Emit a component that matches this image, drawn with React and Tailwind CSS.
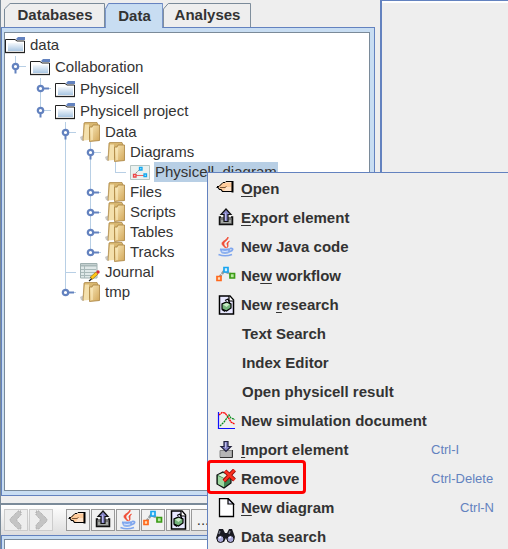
import React from 'react';

const iconProps = { viewBox: '0 0 20 20', className: 'w-5 h-5 shrink-0', 'aria-hidden': true };

function OpenIcon() {
  return (
    <svg {...iconProps}>
      <path d="M1 8 7 3.500H16V12.500H7L4 10Z" fill="#ffcc9c" />
      <path d="M10 8H15V12H8Z" fill="#ffe2c8" />
      <path d="M1 7.500H3L7 3.500H9L10 2.500H17" fill="none" stroke="#000" />
      <path d="M.5 8.500H2L3.500 10.500H5L6.500 12.500H17" fill="none" stroke="#000" strokeWidth="1.200" />
      <path d="M4 8.500H9L10.500 7.500" fill="none" stroke="#5a3a20" strokeWidth=".8" />
      <path d="M16.500 2V13.500" stroke="#000" strokeWidth="2" />
    </svg>
  );
}

function ExportIcon() {
  return (
    <svg {...iconProps}>
      <path d="M5 9H3.500V16.500H16.500V9H15" fill="#777" stroke="#111" strokeWidth="1.500" />
      <path d="M5 15H15V12H5Z" fill="#a4a8a4" />
      <path d="M10 1 5 6.500H8V13.500H12V6.500H15Z" fill="#8584c6" stroke="#111" strokeWidth="1.200" />
      <path d="M9.500 5V12.500" stroke="#b9b8ea" />
    </svg>
  );
}

function ImportIcon() {
  return (
    <svg {...iconProps}>
      <path d="M4 10.500H16V17.500H4Z" fill="#b5b5b5" stroke="#888" />
      <path d="M4 17.500H16.500V10" fill="none" stroke="#333" />
      <path d="M8 1.500H12V6.500H15L10 11.500 5 6.500H8Z" fill="#8584c6" stroke="#22223d" strokeWidth="1.200" />
      <path d="M9.500 2.500V8" stroke="#c1c0ec" />
    </svg>
  );
}

function JavaIcon() {
  return (
    <svg {...iconProps}>
      <path d="M12 0C13 3 7 4.500 8 7.500 8.200 9 10 9.500 9.500 11 8 9 6 8.500 6 6.500 6 4 11 3 12 0ZM13.500 4C10 6 11 7 11.500 8.500 11.800 9.500 11 10 10.500 11 14 9 10 7 13.500 4Z" fill="#f04a32" stroke="#f04a32" strokeWidth=".8" />
      <path d="M4 11.500H14V14.500Q13 17 9 17T4.500 14.500Z" fill="#8db1ef" />
      <path d="M4 12.500Q9 14 14 12M14 11.500Q18 11 16 13.500L13 15M2.500 17.500Q9 20 16 17.500" fill="none" stroke="#7fa6ee" strokeWidth="1.700" />
      <path d="M6 14Q9 15 12 14" stroke="#dce8ff" fill="none" />
    </svg>
  );
}

function WorkflowIcon() {
  return (
    <svg {...iconProps}>
      <path d="M3 12 8 5 13 7 18 10" fill="none" stroke="#929b9d" strokeWidth="2.500" strokeDasharray="4 1" />
      <path d="M8 1.500H12V6H8Z" fill="#d0efff" stroke="#18a5f0" strokeWidth="1.700" />
      <path d="M1 10.500H5V14.500H1Z" fill="#ffdcb5" stroke="#ff681c" strokeWidth="1.700" />
      <path d="M14 7.500H18.500V12H14Z" fill="#b8e8a0" stroke="#3b9b16" strokeWidth="1.700" />
    </svg>
  );
}

function ResearchIcon() {
  return (
    <svg {...iconProps}>
      <path d="M3.500 1H14L17.500 5V19H3.500Z" fill="#e8e8ff" stroke="#000" strokeWidth="1.500" />
      <path d="M13 1V6H17.500" fill="#fff" stroke="#000" strokeWidth="1.200" />
      <path d="M10.500 7 15 9V13L10.500 16 6 14V9Z" fill="#74b47b" stroke="#000" strokeWidth="1.200" />
      <path d="M7 9.500 11 8 13.500 9.500 10.500 12Z" fill="#ccebc9" />
      <path d="M9 5.500 12 4 14 9M6 14.500 9 16.500" fill="none" stroke="#000" strokeWidth="1.200" />
    </svg>
  );
}

function ChartIcon() {
  return (
    <svg {...iconProps}>
      <path d="M2.500 1V17.500H19" fill="none" stroke="#1010ff" strokeWidth="1.200" />
      <path d="M3 4 6 1.500 9 2 12 6 15 11 18.500 13" fill="none" stroke="#f00" strokeWidth="1.300" strokeDasharray="2 .5" />
      <path d="M4 15 8 11 11 7 13 4 15 7 19 8.500" fill="none" stroke="#098c1d" strokeWidth="1.300" strokeDasharray="2 .7" />
    </svg>
  );
}

function RemoveIcon() {
  return (
    <svg {...iconProps}>
      <path d="M7 3 15 6V14L8 19 1 15V6Z" fill="#3f8451" stroke="#111" strokeWidth="1.200" />
      <path d="M2 7 8 9.500V18L2 15Z" fill="#9ed8a0" />
      <path d="M2 6 7 4 13 6.500 8 9Z" fill="#e2f5df" />
      <path d="M9 2 18.500 11M18.500 1 8 12" stroke="#8f0707" strokeWidth="4" />
      <path d="M9 2 18.500 11M18.500 1 8 12" stroke="#fc3020" strokeWidth="2.500" />
    </svg>
  );
}

function PageIcon() {
  return (
    <svg {...iconProps}>
      <path d="M3.500 .5H12L17.500 6V18.500H3.500Z" fill="#fff" stroke="#000" strokeWidth="1.300" />
      <path d="M12 .5V6H17.500Z" fill="#dcdcf8" stroke="#000" strokeWidth="1.200" />
    </svg>
  );
}

function BinocularsIcon() {
  return (
    <svg {...iconProps}>
      <path d="M3 2H7L9 6H11L13 2H16L19 10 17 15 12 15 10 11 8 15 3 15 0 11Z" fill="#191921" />
      <circle cx="4.500" cy="12" r="3.500" fill="#a7a7d6" stroke="#111" />
      <circle cx="14.500" cy="12" r="3.500" fill="#a7a7d6" stroke="#111" />
      <path d="M4 4 3 7M14 4 13 7" stroke="#777b88" strokeWidth="1.500" />
      <path d="M3 11 5 10M13 11 15 10" stroke="#ececff" strokeWidth="1.500" />
    </svg>
  );
}

function FolderIcon() {
  return (
    <svg {...iconProps}>
      <defs>
        <linearGradient id="folder" x1="0" y1="0" x2="0" y2="1">
          <stop offset="0" stopColor="#f4f8fc" />
          <stop offset="1" stopColor="#a9c6e2" />
        </linearGradient>
      </defs>
      <path d="M.5 4.500H10L12 6H19.500V17.500H.5Z" fill="#fff" stroke="#222" />
      <path d="M3 8H18V16H3Z" fill="url(#folder)" />
      <path d="M11 4 13 2H20V5H12Z" fill="#6382bf" />
      <path d="M0 17.500H20" stroke="#222" strokeWidth="1.300" />
    </svg>
  );
}

function PackageIcon() {
  return (
    <svg {...iconProps}>
      <defs>
        <linearGradient id="gold" x1="0" y1="0" x2="1" y2="1">
          <stop offset="0" stopColor="#f9e9bb" />
          <stop offset="1" stopColor="#d2a759" />
        </linearGradient>
      </defs>
      <path d="M0 15 4 13V19L1 18Z" fill="#c8c8c8" />
      <path d="M4 1 5 .5H17L18 3V16H5L3 18.500Z" fill="#d8b770" stroke="#a8813d" strokeWidth=".7" />
      <path d="M5 2.500H9V18L3.500 18.500Z" fill="#f4e0ac" />
      <path d="M9.500 5H12L13 3H19.500V18.500L9.500 19.500Z" fill="url(#gold)" stroke="#a8813d" strokeWidth=".8" />
      <path d="M12 6V18" stroke="#fff0c5" />
    </svg>
  );
}

function DiagramIcon() {
  return (
    <svg {...iconProps}>
      <path d="M.5 3.500H19.500V17.500H.5Z" fill="#eaf1ef" stroke="#b6c5c3" />
      <path d="M4 13 10 7" fill="none" stroke="#7a8a89" strokeDasharray="2 1" />
      <path d="M4 13.500H15" stroke="#ec6262" />
      <path d="M3.500 12.500H6V15H3.500Z" fill="#fff" stroke="#ec4545" strokeWidth="1.300" />
      <path d="M9.500 5.500H12V8H9.500ZM14 12H16.500V14.500H14Z" fill="#c8f0ff" stroke="#13a8ef" strokeWidth="1.300" />
    </svg>
  );
}

function JournalIcon() {
  return (
    <svg {...iconProps}>
      <path d="M.5 1.500H17V16H.5Z" fill="#dfe8e8" stroke="#9fb0b0" />
      <path d="M1 2.500H17V4.500H1Z" fill="#a9b9b9" />
      <path d="M1 7.500H16M1 10.500H15M1 13.500H12M4.500 4V16" stroke="#a9b9b9" />
      <path d="M11 16.500 17 11" stroke="#8a6500" strokeWidth="3.500" />
      <path d="M11.500 16 17 11" stroke="#ffc61a" strokeWidth="2.500" />
      <circle cx="18" cy="10" r="1.700" fill="#d42d38" />
      <path d="M9 19 11.500 17" stroke="#111" strokeWidth="1.300" />
    </svg>
  );
}

/* One 25px column of the tree: blank, passing line, leaf elbow or an expand handle. */
function Guide({ kind, tall }) {
  const h = tall ? 22 : 20;
  const m = 10.5;
  const [shape, state] = kind.split('-');
  return (
    <svg width="25" height={h} viewBox={`0 0 25 ${h}`} className="shrink-0" aria-hidden>
      {shape !== 'blank' && <path d={`M10.500 0V${shape === 'end' ? m : h}`} stroke="#b8cfe5" />}
      {shape !== 'blank' && shape !== 'line' && <path d={`M10 ${m}H21`} stroke="#b8cfe5" />}
      {state === 'open' && <path d={`M10.500 ${m}V${m + 7}`} stroke="#6382bf" strokeWidth="2" />}
      {state === 'closed' && <path d={`M11 ${m}H19`} stroke="#6382bf" strokeWidth="2" />}
      {state && <circle cx="10.500" cy={m} r="2.700" fill="#fff" stroke="#6382bf" strokeWidth="2.200" />}
    </svg>
  );
}

const rows = [
  { label: 'data', Icon: FolderIcon, guides: [], tall: true },
  { label: 'Collaboration', Icon: FolderIcon, guides: ['end-open'], tall: true },
  { label: 'Physicell', Icon: FolderIcon, guides: ['blank', 'tee-closed'], tall: true },
  { label: 'Physicell project', Icon: FolderIcon, guides: ['blank', 'end-open'], tall: true },
  { label: 'Data', Icon: PackageIcon, guides: ['blank', 'blank', 'tee-open'] },
  { label: 'Diagrams', Icon: PackageIcon, guides: ['blank', 'blank', 'line', 'tee-open'] },
  { label: 'Physicell_diagram', Icon: DiagramIcon, guides: ['blank', 'blank', 'line', 'line', 'end'], selected: true },
  { label: 'Files', Icon: PackageIcon, guides: ['blank', 'blank', 'line', 'tee-closed'] },
  { label: 'Scripts', Icon: PackageIcon, guides: ['blank', 'blank', 'line', 'tee-closed'] },
  { label: 'Tables', Icon: PackageIcon, guides: ['blank', 'blank', 'line', 'tee-closed'] },
  { label: 'Tracks', Icon: PackageIcon, guides: ['blank', 'blank', 'line', 'end-closed'] },
  { label: 'Journal', Icon: JournalIcon, guides: ['blank', 'blank', 'tee'] },
  { label: 'tmp', Icon: PackageIcon, guides: ['blank', 'blank', 'end-closed'] },
];

const menu = [
  { label: 'Open', key: 0, Icon: OpenIcon },
  { label: 'Export element', key: 0, Icon: ExportIcon },
  { label: 'New Java code', Icon: JavaIcon },
  { label: 'New workflow', key: 2, Icon: WorkflowIcon },
  { label: 'New research', key: 4, Icon: ResearchIcon },
  { label: 'Text Search' },
  { label: 'Index Editor' },
  { label: 'Open physicell result' },
  { label: 'New simulation document', Icon: ChartIcon },
  { label: 'Import element', key: 0, Icon: ImportIcon, shortcut: 'Ctrl-I' },
  { label: 'Remove', Icon: RemoveIcon, shortcut: 'Ctrl-Delete', marked: true },
  { label: 'New diagram', key: 0, Icon: PageIcon, shortcut: 'Ctrl-N', right: true },
  { label: 'Data search', Icon: BinocularsIcon },
];

function Tab({ label, active, width }) {
  return (
    <button
      role="tab"
      aria-selected={!!active}
      className={`relative shrink-0 pl-px ${width} ${active ? 'z-10 -mb-px' : ''}`}
    >
      <svg className="absolute inset-0 h-full w-full" viewBox="0 0 100 24" preserveAspectRatio="none" aria-hidden>
        <path
          d="M.5 25V6L6 .5H99.500V25"
          fill={active ? '#c8ddf2' : '#eeeeee'}
          stroke={active ? '#6382bf' : '#7a8a99'}
          vectorEffect="non-scaling-stroke"
        />
      </svg>
      <span className="relative">{label}</span>
    </button>
  );
}

function MenuLabel({ text, index }) {
  if (index === undefined) return <span>{text}</span>;
  return (
    <span>
      {text.slice(0, index)}
      <span className="underline underline-offset-2">{text[index]}</span>
      {text.slice(index + 1)}
    </span>
  );
}

function ToolButton({ label, children }) {
  return (
    <button
      aria-label={label}
      className="flex h-[22px] w-6 shrink-0 items-center justify-center border border-[#999999] bg-[#f1f1f1]"
    >
      {children}
    </button>
  );
}

function Arrow({ next }) {
  return (
    <button
      aria-label={next ? 'Forward' : 'Back'}
      className="flex h-[22px] w-6 shrink-0 items-center justify-center border border-[#cccccc] bg-[#eeeeee]"
    >
      <svg viewBox="0 0 20 20" className={next ? 'h-5 w-5 -scale-x-100' : 'h-5 w-5'} aria-hidden>
        <path d="M12 1H15V5L11 9V11L15 15V19H12L4 11V9Z" fill="#c4c4c4" stroke="#a8a8a8" strokeDasharray="1 1" />
      </svg>
    </button>
  );
}

export default function App() {
  return (
    <main className="relative flex h-screen overflow-hidden bg-[#eeeeee] font-['Liberation_Sans',Arial,sans-serif] text-[15px] leading-5 text-[#333333]">
      <section className="flex w-[375px] shrink-0 flex-col border-l border-[#7a8a99]">
        <div role="tablist" className="flex h-[27px] pt-[3px] pl-[3px] font-bold">
          <Tab label="Databases" width="w-[101px]" />
          <Tab label="Data" active width="w-[58px]" />
          <Tab label="Analyses" width="w-[88px]" />
        </div>
        <div className="flex flex-1 flex-col border border-[#6382bf] bg-[#c8ddf2] pt-1 pr-1 pb-1 pl-[2px]">
          <div role="tree" className="flex-1 border border-[#7a8a99] bg-white pt-px">
            {rows.map(({ label, Icon, guides, tall, selected }) => (
              <div
                key={label}
                role="treeitem"
                aria-selected={!!selected}
                className={tall ? 'flex h-[22px] items-center' : 'flex h-5 items-center'}
              >
                {guides.map((g, i) => (
                  <Guide key={i} kind={g} tall={tall} />
                ))}
                <Icon />
                <span className={selected ? 'ml-1 bg-[#b8cfe5] px-px' : 'ml-1 px-px'}>{label}</span>
              </div>
            ))}
          </div>
        </div>
        <div className="mt-[7px] flex h-8 items-center gap-px border-t-2 border-[#7a8a99] bg-linear-to-b from-white to-[#dddddd] pl-[3px]">
          <Arrow />
          <Arrow next />
          <span className="w-[11px] shrink-0" />
          <ToolButton label="Open"><OpenIcon /></ToolButton>
          <ToolButton label="Export element"><ExportIcon /></ToolButton>
          <ToolButton label="New Java code"><JavaIcon /></ToolButton>
          <ToolButton label="New workflow"><WorkflowIcon /></ToolButton>
          <ToolButton label="New research"><ResearchIcon /></ToolButton>
          <ToolButton label="More">...</ToolButton>
        </div>
        <div className="h-[14px] border border-b-0 border-[#6382bf] bg-[#c8ddf2] px-[2px] pt-[3px]">
          <div className="h-full border border-b-0 border-[#7a8a99] bg-white" />
        </div>
      </section>
      <section className="ml-[5px] flex-1 border-t border-l-2 border-[#6382bf]">
        <div className="h-full border-t-2 border-white" />
      </section>

      <div
        role="menu"
        className="absolute top-[172px] right-0 bottom-[-2px] left-[207px] flex flex-col border-t border-l border-[#6382bf] bg-[#eeeeee] pt-[2px]"
      >
        {menu.map(({ label, key, Icon, shortcut, right, marked }) => (
          <button
            key={label}
            role="menuitem"
            className="relative flex flex-1 items-center pr-[14px] pl-2 text-left font-bold"
          >
            {Icon ? <Icon /> : <span className="w-[21px] shrink-0" />}
            <span className="ml-[5px] flex-1">
              <MenuLabel text={label} index={key} />
            </span>
            {shortcut && (
              <span className={`w-[63px] text-[13px] font-normal text-[#6382bf] ${right ? 'text-right' : 'text-left'}`}>
                {shortcut}
              </span>
            )}
            {marked && (
              <span className="absolute -top-1 -bottom-px -left-px w-[99px] rounded-sm border-[3px] border-[#ff0000]" />
            )}
          </button>
        ))}
      </div>
    </main>
  );
}
